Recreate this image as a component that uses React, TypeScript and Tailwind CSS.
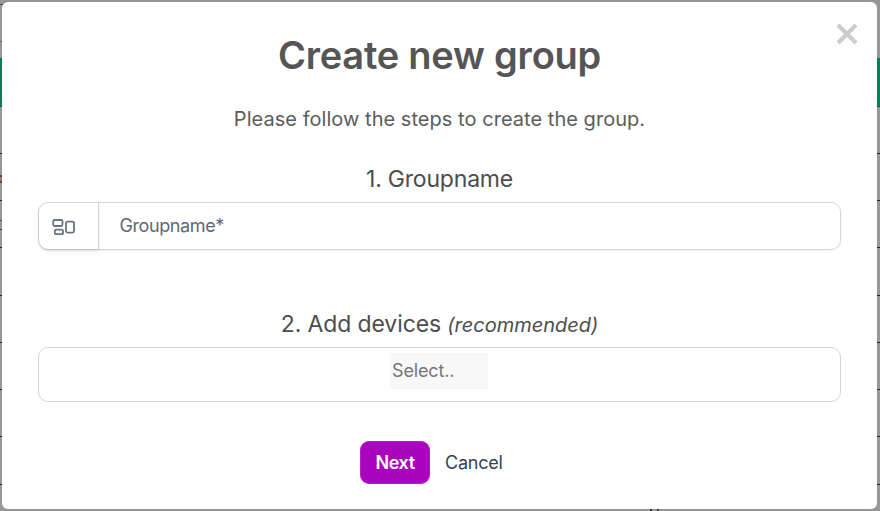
import React from "react";

const rowHeights = ["h-[47px]", "h-[47px]", "h-[47px]", "h-[48px]", "h-[47px]", "h-[47px]", "h-[47px]", "h-[48px]"];

function Backdrop() {
  return (
    <div aria-hidden="true" className="absolute inset-0 flex flex-col bg-[#969696]">
      <div className="h-[5px] w-[6px] shrink-0 border-b border-[#555555]" />
      <div className="h-[37px] w-[6px] shrink-0 border-b border-[#666666]" />
      <div className="h-4 shrink-0" />
      <div className="h-[49px] shrink-0 border-b border-[#075b3b] bg-[#0a7d52]" />
      {rowHeights.map((h, i) => (
        <div key={i} className={`${h} flex shrink-0 items-start border-b border-[#252525]`}>
          {i === 1 && <div className="mt-[21px] h-2 w-[2px] border-y-2 border-[#6a3d35] bg-[#9b7c70]" />}
          {i === 2 && <div className="mt-[19px] h-[10px] w-[2px] border-y border-[#444444]" />}
        </div>
      ))}
      <div className="ml-[650px] mt-[24px] flex gap-[5px]">
        <div className="h-[2px] w-[2px] bg-[#303b60]" />
        <div className="h-[2px] w-[2px] bg-[#303b60]" />
      </div>
    </div>
  );
}

function GroupIcon() {
  return (
    <svg width="24" height="18" viewBox="0 0 24 18" fill="none" stroke="#6b7280" strokeWidth="1.8">
      <rect x="1.2" y="2" width="9.3" height="6" rx="1.4" />
      <rect x="2.8" y="11.6" width="8.2" height="4.6" rx="1.3" />
      <rect x="14" y="3.6" width="8" height="11" rx="1.5" />
    </svg>
  );
}

export default function App() {
  return (
    <div className="relative h-[511px] w-[880px] overflow-hidden pl-[2px] pt-[2px] font-['Inter',sans-serif] text-[#555555]">
      <Backdrop />
      <main className="relative flex h-[507px] w-[875px] flex-col rounded-[6px] bg-white px-9">
        <button aria-label="Close" className="absolute right-[19.5px] top-[21px]">
          <svg width="22" height="22" viewBox="0 0 22 22" stroke="#cccccc" strokeWidth="4.2">
            <path d="M2 2 20 20M20 2 2 20" />
          </svg>
        </button>
        <h1 className="mt-[29px] text-center text-[38px] font-semibold leading-[48px] tracking-[-0.22px]">Create new group</h1>
        <p className="mt-[26px] text-center text-[20px] leading-7 tracking-[0.04px] text-[#5c5c5c]">Please follow the steps to create the group.</p>
        <h2 className="mt-[30px] text-center text-[23px] leading-8 tracking-[-0.2px] text-[#4d4d4d]">1. Groupname</h2>
        <div className="mt-[7px] flex h-12 w-[803px] shrink-0 rounded-[10px] border border-[#d1d5db] shadow-[0_1px_2px_0_rgba(0,0,0,0.05)]">
          <div className="flex w-[60px] items-center rounded-l-[9px] border-r border-[#d1d5db] pl-[13px] pt-[2px] shadow-[0_2px_3px_0_rgba(0,0,0,0.1)]">
            <GroupIcon />
          </div>
          <span className="pl-[20.5px] text-[18px] leading-[46px] tracking-[-0.4px] text-[#5f6877]">Groupname*</span>
        </div>
        <h2 className="mt-[58px] text-center text-[23px] leading-8 tracking-[-0.12px] text-[#4d4d4d]">
          2. Add devices <em className="text-[20px] tracking-[-0.02px]">(recommended)</em>
        </h2>
        <div className="mt-[6px] flex h-[55px] w-[803px] shrink-0 justify-center rounded-[10px] border border-[#d1d5db] pr-[2px] pt-[5px]">
          <div className="h-9 w-[98px] bg-[#f8f8f8] pl-[2.5px] text-[18px] leading-9 tracking-[-0.15px] text-[#777777]">Select..</div>
        </div>
        <div className="mt-[39px] flex items-center pl-[322px]">
          <button className="h-[43px] w-[70px] rounded-[9px] border border-[#b41cc6] bg-[#a805bd] text-[18px] font-semibold tracking-[-0.4px] text-white">Next</button>
          <button className="ml-[15px] text-[18px] tracking-[-0.25px] text-[#374151]">Cancel</button>
        </div>
      </main>
    </div>
  );
}
